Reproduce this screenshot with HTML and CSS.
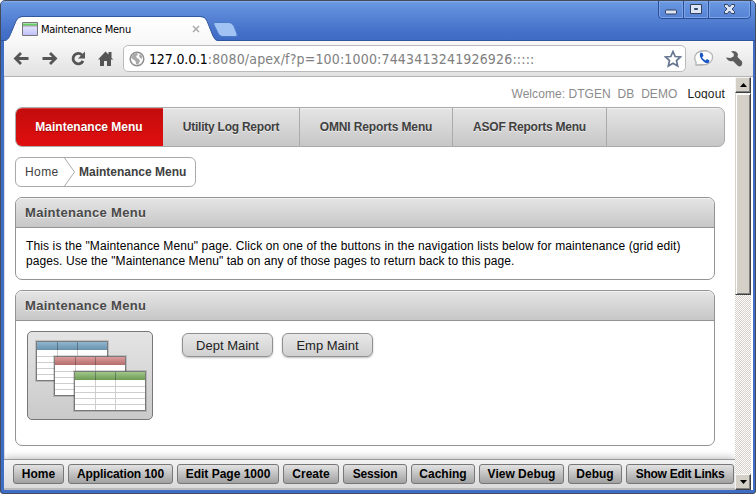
FILE: index.html
```html
<!DOCTYPE html>
<html lang="en">
<head>
<meta charset="utf-8">
<title>Maintenance Menu</title>
<link rel="stylesheet" href="styles.css">
</head>
<body>
<div class="window">
  <header class="titlebar">
    <div class="tab">
      <svg class="tab-shape" width="240" height="26" viewBox="0 0 240 26">
        <defs>
          <linearGradient id="tabfill" x1="0" y1="0" x2="0" y2="1"><stop offset="0" stop-color="#fff"/><stop offset="1" stop-color="#f8f8f8"/></linearGradient>
        </defs>
        <path d="M0 25C4 24 5 22 7 17L12 5Q14 1 18 1H196Q201 1 203 5L209 20Q211 25 215 25V26H0Z" fill="url(#tabfill)"/>
        <path d="M0 25C4 24 5 22 7 17L12 5Q14 .5 18 .5H196Q201 .5 203 5L209 20Q211 25 215 25" fill="none" stroke="#34589c"/>
        <path d="M211 6.500H225Q228 6.500 230 10L233 18Q234 20.500 231 20.500H218Q215 20 214 17L210 9Q209 6.500 211 6.500Z" fill="#a1c3f4" stroke="#4c7acb"/>
        <path d="M189 10l6 6m0-6l-6 6" stroke="#aaa" stroke-width="1.500"/>
      </svg>
      <svg class="favicon" width="16" height="15" viewBox="0 0 16 15"><defs><linearGradient id="fav" x1="0" y1="0" x2="0" y2="1"><stop offset="0" stop-color="#f4f4ff"/><stop offset="1" stop-color="#bebefa"/></linearGradient></defs><path d="M.5 .5h15v13H.5z" fill="url(#fav)" stroke="#777"/><path d="M1 2.500h14" stroke="#62d162" stroke-width="2"/><path d="M1 4h14" stroke="#666" stroke-width=".6"/></svg>
      <span class="tab-title">Maintenance Menu</span>
    </div>
    <svg class="controls" width="93" height="18" viewBox="0 0 93 18">
      <path d="M.5 0V14Q.5 17.500 4 17.500H89Q92.500 17.500 92.500 14V0M25.500 0V17M50.500 0V17" fill="none" stroke="#2b4f94"/>
      <path d="M1.500 0V14Q2 16.500 4 16.500H24.500V0M26.500 0V16.500H49.500V0M51.500 0V16.500H89Q91.500 16 91.500 14V0" fill="none" stroke="#7da4e8"/>
      <rect x="7.500" y="9" width="11" height="4" rx="1" fill="#dce6f7" stroke="#35435f"/>
      <path d="M32.500 3.500h11v9h-11zM36.500 7.500v1h3v-1z" fill="#dce6f7" fill-rule="evenodd" stroke="#35435f"/>
      <path d="M66.500 3.500h3l2 2.500 2-2.500h3v2l-2.500 2.500 2.500 2.500v2h-3l-2-2.500-2 2.500h-3v-2L69 8l-2.500-2.500z" fill="#dce6f7" stroke="#35435f"/>
    </svg>
  </header>
  <div class="frame">
    <div class="toolbar">
      <svg class="nav" width="105" height="20" viewBox="0 0 105 20" fill="none" stroke="#555" stroke-width="2.800">
        <path d="M9 4L3.500 9.500 9 15M3.500 9.500H16.500"/>
        <path d="M38 4l5.500 5.500L38 15M43.500 9.500H30.500"/>
        <path d="M70 6A5.200 5.200 0 1 0 71 11.800"/><path d="M73 2.500V9.500H66z" fill="#555" stroke="none"/>
        <path d="M86 10.500L93.500 2.500l3 3V3h3v6l2 1.500H99V17h-4v-5h-3v5h-4v-6.500z" fill="#555" stroke="none"/>
      </svg>
      <div class="omnibox">
        <svg class="globe" width="16" height="16" viewBox="0 0 16 16"><circle cx="8" cy="8" r="6.800" fill="#fff" stroke="#8e8e8e" stroke-width="1.500"/><path d="M2 7L4 3l4-1 1 2-2 1 1 2 2 1 1 2-2 4-2-1-.500-3-3-2-1-1zM11 3l2 2v3l-2-1-1-2z" fill="#aaa"/></svg>
        <span class="url"><b>127.0.0.1</b>:8080/apex/f?p=100:1000:7443413241926926:::::</span>
        <svg class="star" width="18" height="18" viewBox="0 0 18 18"><path d="M9 1.500l2.200 5 5.300.5-4 3.600 1.200 5.400L9 13.200 4.300 16l1.200-5.400-4-3.600 5.300-.5z" fill="#fff" stroke="#667590" stroke-width="1.700"/></svg>
      </div>
      <svg class="tools" width="50" height="20" viewBox="0 0 50 20">
        <path d="M2 16L2 13Q-1 8 3 4Q7 1 13 2Q19 4 18.500 8.500Q18 14 12 15.500Q8 16 2 16Z" fill="#fff" stroke="#b4b4b4" stroke-width="1.300"/>
        <path d="M6.500 3.500L8.500 4l1 3-1.500 1.200Q9.500 11 11.500 11.500L13 10l2.500 1.500-.5 2Q12.500 15.500 9 12Q4.500 7.500 6.500 3.500Z" fill="#1857c4"/>
        <path d="M37 2.500Q42 1 44 5L43.500 8 48 12.500Q49 16 46 17.500L44 17 39 12Q34 13 32 8.500L36.500 9 39.500 7.500 40 5Z" fill="#5c5c5c"/>
      </svg>
    </div>
    <div class="viewport">
      <div class="page">
        <div class="content">
          <div class="userbar"><span class="welcome">Welcome: DTGEN&nbsp; DB&nbsp; DEMO</span><span class="logout">Logout</span></div>
          <nav class="tabs">
            <span class="item current"><i>Maintenance Menu</i></span><span class="item w2"><i>Utility Log Report</i></span><span class="item w3"><i>OMNI Reports Menu</i></span><span class="item w4"><i>ASOF Reports Menu</i></span>
          </nav>
          <div class="crumbs"><span class="home">Home</span><svg width="12" height="28" viewBox="0 0 12 28"><path d="M.5 0L10.500 14 .5 28" fill="none" stroke="#aaa"/></svg><b>Maintenance Menu</b></div>
          <section class="region intro">
            <h2><span>Maintenance Menu</span></h2>
            <p><span class="l1">This is the "Maintenance Menu" page. Click on one of the buttons in the navigation lists below for maintenance (grid edit)</span><br><span class="l2">pages. Use the "Maintenance Menu" tab on any of those pages to return back to this page.</span></p>
          </section>
          <section class="region lists">
            <h2><span>Maintenance Menu</span></h2>
            <div class="body">
              <div class="picture">
                <svg width="124" height="87" viewBox="0 0 124 87">
                  <defs>
                    <linearGradient id="blue" x1="0" y1="0" x2="0" y2="1"><stop offset="0" stop-color="#8eb6d1"/><stop offset="1" stop-color="#6a91ad"/></linearGradient>
                    <linearGradient id="red" x1="0" y1="0" x2="0" y2="1"><stop offset="0" stop-color="#dc9b9b"/><stop offset="1" stop-color="#b56d6d"/></linearGradient>
                    <linearGradient id="green" x1="0" y1="0" x2="0" y2="1"><stop offset="0" stop-color="#a0c787"/><stop offset="1" stop-color="#6d9b55"/></linearGradient>
                    <g id="sheet"><path d="M-.5 -.500h73v41h-73z" fill="none" stroke="#000" stroke-opacity=".15"/><path d="M.5 .5h71v39H.5z" fill="#fff"/><path d="M1 15.500h70M1 21.500h70M1 27.500h70M1 33.500h70M21.500 9v30M41.500 9v30" stroke="#cecece"/></g>
                    <g id="edge" fill="none" stroke="#333"><path d="M.5 .5h71v39H.5z" stroke-opacity=".62"/><path d="M21.500 1v8M41.500 1v8" stroke-opacity=".4"/></g>
                  </defs>
                  <g transform="translate(8 9)"><use href="#sheet"/><path d="M1 1h70v8H1z" fill="url(#blue)"/><use href="#edge"/></g>
                  <g transform="translate(26 24)"><use href="#sheet"/><path d="M1 1h70v8H1z" fill="url(#red)"/><use href="#edge"/></g>
                  <g transform="translate(46 39)"><use href="#sheet"/><path d="M1 1h70v8H1z" fill="url(#green)"/><use href="#edge"/></g>
                </svg>
              </div>
              <button class="btn"><span>Dept Maint</span></button>
              <button class="btn"><span>Emp Maint</span></button>
            </div>
          </section>
        </div>
        <footer class="devbar">
          <span class="d1">Home</span><span class="d2">Application 100</span><span class="d3">Edit Page 1000</span><span class="d4">Create</span><span class="d5">Session</span><span class="d6">Caching</span><span class="d7">View Debug</span><span class="d8">Debug</span><span class="d9">Show Edit Links</span>
        </footer>
      </div>
      <div class="scrollbar">
        <div class="arrow"><svg width="7" height="4"><path d="M0 4L3.500 0 7 4z"/></svg></div>
        <div class="thumb"></div>
        <div class="track"></div>
        <div class="arrow"><svg width="7" height="4"><path d="M0 0h7L3.500 4z"/></svg></div>
      </div>
    </div>
  </div>
</div>
</body>
</html>
```
FILE: styles.css
```css
* { box-sizing: border-box; }
html, body { margin: 0; background: #fff; }
body { width: 756px; height: 494px; overflow: hidden; font: 12px/15px "Liberation Sans", sans-serif; color: #000; }
svg { display: block; flex: none; }
span, i, b { white-space: nowrap; }
.window { width: 756px; height: 494px; border: 1px solid #444b5a; border-radius: 5px 5px 3px 3px; background: #3f6cc5; display: flex; flex-direction: column; padding: 0 2px 3px 3px; }
.titlebar { height: 40px; margin: 0 -2px 0 -3px; padding-left: 3px; background: linear-gradient(#8bb0ea 0, #6896e0 2px, #4571c9 30px, #3e6bc5 39px, #2f559c 39px); border-radius: 4px 4px 0 0; display: flex; justify-content: space-between; align-items: flex-start; padding-right: 4px; }
.tab { display: grid; grid-template-columns: 18px 19px 1fr; align-items: center; margin-top: 15px; height: 26px; }
.tab-shape { grid-area: 1 / 1 / 2 / 4; }
.favicon { grid-area: 1 / 2; }
.tab-title { grid-area: 1 / 3; font: 11px/14px "DejaVu Sans Condensed", "DejaVu Sans", sans-serif; font-stretch: condensed; letter-spacing: -.26px; padding-top: 1px; }
.frame { flex: 1; display: flex; flex-direction: column; background: #fff; min-height: 0; }
.toolbar { height: 36px; background: linear-gradient(#f8f8f8, #e2e2e2); border-bottom: 1px solid #b4b4b4; display: flex; align-items: center; padding-left: 8px; }
.omnibox { width: 563px; height: 27px; margin-left: 6px; border: 1px solid #bbb; border-radius: 5px; background: #fff; display: flex; align-items: center; padding: 0 3px 0 5px; }
.url { flex: 1; padding-left: 4px; font: 14px/20px "DejaVu Sans Condensed", "DejaVu Sans", sans-serif; font-stretch: condensed; color: #808080; letter-spacing: .17px; }
.url b { color: #000; font-weight: normal; letter-spacing: -.15px; }
.tools { margin-left: 8px; }
.viewport { flex: 1; display: flex; min-height: 0; }
.page { width: 731px; display: flex; flex-direction: column; border-left: 1px solid #ddd; }
.content { flex: 1; min-height: 0; padding: 10px 10px 0; }
.userbar { height: 20px; display: flex; justify-content: flex-end; gap: 10px; line-height: 15px; }
.welcome { color: #8b8b8b; letter-spacing: .06px; }
.logout { color: #222; height: 12px; overflow: hidden; letter-spacing: .15px; }
.tabs { width: 710px; height: 40px; border: 1px solid #aaa; border-radius: 7px; background: linear-gradient(#fff 0, #e4e4e4 1px, #c7c7c7); display: flex; overflow: hidden; }
.item { display: flex; justify-content: center; align-items: center; border-right: 1px solid #aaa; font-weight: bold; color: #404040; text-shadow: 0 1px #eee; }
.item i { font-style: normal; }
.current { width: 148px; margin: -1px 0 -1px -1px; background: linear-gradient(#ad1919 1px, #e96b6b 1px, #c30c0c 2px, #e10e0e); color: #fff; border: 0; border-radius: 6px 0 0 6px; text-shadow: 0 1px #900; }
.w2 { width: 137px; letter-spacing: -.24px; } .w3 { width: 153px; letter-spacing: -.12px; } .w4 { width: 154px; letter-spacing: -.22px; }
.crumbs { width: 181px; height: 30px; margin-top: 10px; border: 1px solid #aaa; border-radius: 6px; display: flex; align-items: center; color: #404040; }
.crumbs .home { width: 48px; padding-left: 9px; letter-spacing: .4px; }
.crumbs b { margin-left: 3px; }
.region { width: 700px; margin-top: 10px; border: 1px solid #939393; border-radius: 7px; overflow: hidden; }
.region h2 { margin: 0; height: 30px; font: bold 13px/29px "Liberation Sans", sans-serif; letter-spacing: .31px; color: #494949; padding-left: 9px; border-bottom: 1px solid #939393; background: linear-gradient(#fff 0, #e4e4e4 1px, #c7c7c7); text-shadow: 0 1px #eee; }
.intro { height: 83px; }
.intro p { margin: 11px 0 0 10px; }
.l1 { letter-spacing: .118px; }
.l2 { letter-spacing: .08px; }
.lists { height: 156px; }
.body { display: flex; align-items: flex-start; padding: 10px 0 0 11px; }
.picture { width: 126px; height: 89px; border: 1px solid #777; border-radius: 5px; background: linear-gradient(#e4e4e4, #cacaca); margin-right: 29px; }
.btn { width: 91px; height: 24px; margin: 2px 9px 0 0; padding: 1px 0 0; border: 1px solid #909090; border-radius: 6px; background: linear-gradient(#e8e8e8, #d0d0d0); box-shadow: 0 1px 2px rgba(0,0,0,.25); font: 13px/19px "Liberation Sans", sans-serif; color: #222; }
.devbar { height: 31px; margin-left: -1px; border-top: 1px solid #999; border-bottom: 2px solid #bbb; background: linear-gradient(#f3f3f3, #dadada); box-shadow: 0 -1px 8px rgba(0,0,0,.28); clip-path: inset(-12px 0 0 0); display: flex; gap: 4px; padding: 4px 0 0 9px; }
.devbar span { flex: none; height: 20px; border: 1px solid #777; border-radius: 3px; background: linear-gradient(#e2e2e2, #a1a1a1); font: bold 12px/18px "Liberation Sans", sans-serif; text-align: center; }
.devbar .d1 { width: 51px; } .devbar .d2 { width: 105px; letter-spacing: -.12px; } .devbar .d3 { width: 102px; } .devbar .d4 { width: 56px; } .devbar .d5 { width: 64px; letter-spacing: -.2px; } .devbar .d6 { width: 64px; } .devbar .d7 { width: 85px; } .devbar .d8 { width: 54px; } .devbar .d9 { width: 108px; letter-spacing: -.27px; }
.scrollbar { width: 16px; display: flex; flex-direction: column; }
.arrow { height: 16px; background: #d4d0c8; border: 1px solid; border-color: #f5f4f0 #404040 #404040 #f5f4f0; box-shadow: inset -1px -1px #808080; display: flex; align-items: center; justify-content: center; }
.thumb { height: 202px; background: #d4d0c8; border: 1px solid; border-color: #f5f4f0 #404040 #404040 #d4d0c8; box-shadow: inset 1px 1px #fff, inset -1px -1px #808080; }
.track { flex: 1; background: repeating-conic-gradient(#d4d0c8 0 25%, #fff 0 50%) 0 0 / 2px 2px; }
```
